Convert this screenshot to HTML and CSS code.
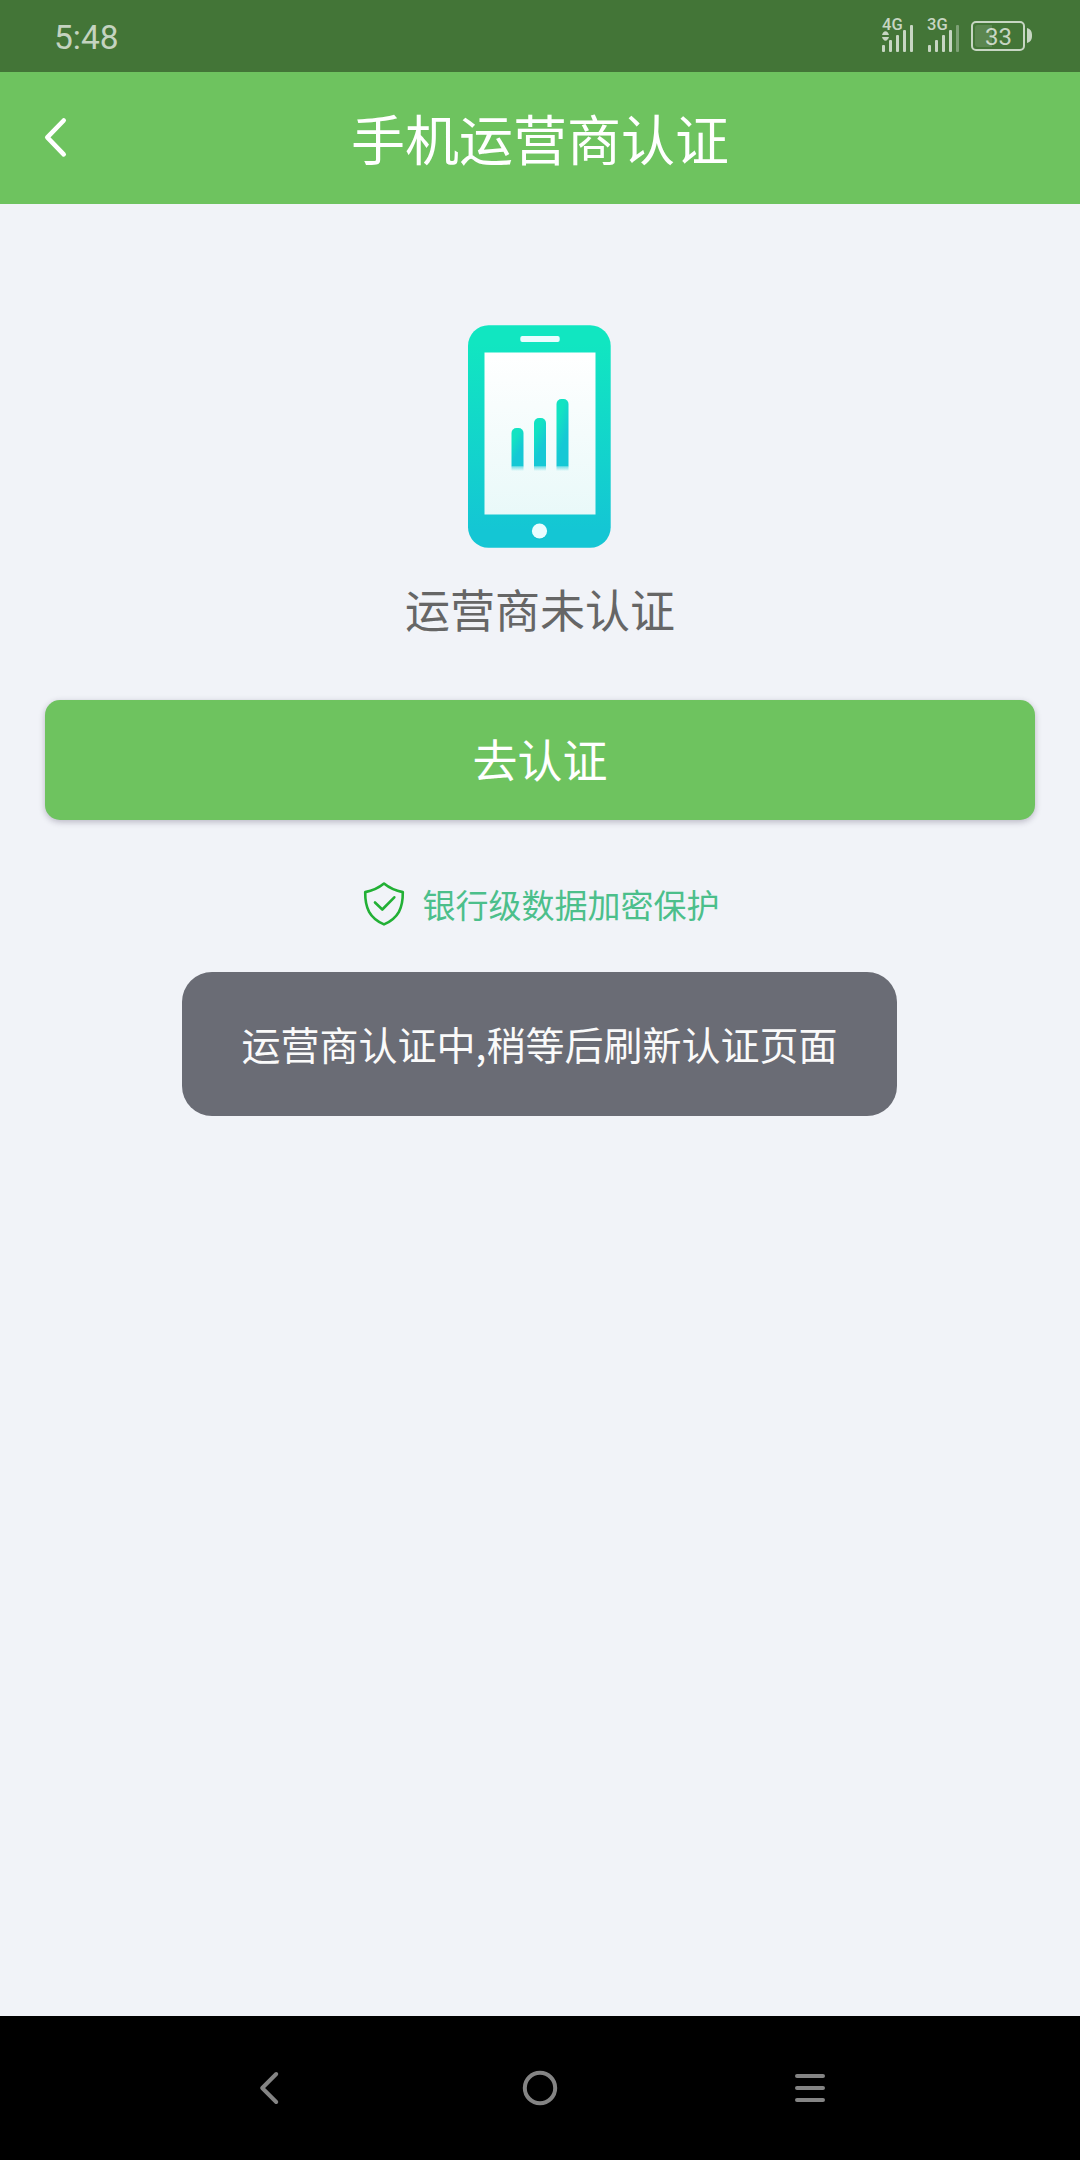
FILE: index.html
```html
<!DOCTYPE html>
<html lang="zh-CN">
<head>
<meta charset="utf-8">
<title>手机运营商认证</title>
<link rel="stylesheet" href="styles.css">
</head>
<body>
<div class="status">
  <span class="time">5:48</span>
  <svg class="indicators" width="160" height="72" viewBox="880 0 160 72">
    <g class="ink">
      <text class="network" x="882" y="30">4G</text>
      <path d="M882 35c.6-2 2-3.700 3.500-3.700s2.900 1.700 3.500 3.700zM882 37c.6 2 2 3.700 3.500 3.700s2.900-1.700 3.500-3.700z"/>
      <rect x="882" y="45" width="3" height="7" rx="1"/>
      <rect x="889" y="40" width="3" height="12" rx="1"/>
      <rect x="896" y="35" width="3" height="17" rx="1"/>
      <rect x="903" y="30" width="3" height="22" rx="1"/>
      <rect x="910" y="25" width="3" height="27" rx="1"/>
      <text class="network" x="927" y="30">3G</text>
      <rect x="928" y="45" width="3" height="7" rx="1"/>
      <rect x="935" y="40" width="3" height="12" rx="1"/>
      <rect x="942" y="35" width="3" height="17" rx="1"/>
      <rect x="949" y="30" width="3" height="22" rx="1"/>
      <rect class="faint" x="956" y="25" width="3" height="27" rx="1"/>
      <rect class="frame" x="972" y="22" width="52" height="28" rx="4"/>
      <path d="M1027 28c3.500 1 5 3 5 7.500s-1.500 6.500-5 7.500z"/>
      <text class="level" x="985" y="45">33</text>
    </g>
    <path class="charge" d="M978 25h14v22h-14a3 3 0 0 1-3-3v-16a3 3 0 0 1 3-3z"/>
  </svg>
</div>
<header class="header">
  <svg class="back" width="24" height="42" viewBox="0 0 24 42"><path d="M19.700 3.500L3.300 20.400l16.400 17"/></svg>
  <h1 class="title">手机运营商认证</h1>
</header>
<main class="main">
  <svg class="phone" width="143" height="223" viewBox="468 325 143 223">
    <defs>
      <linearGradient id="body" x1="0" y1="0" x2="0" y2="1"><stop offset=".08" stop-color="#11e6c1"/><stop offset=".92" stop-color="#14c6d4"/></linearGradient>
      <linearGradient id="screen" x1="0" y1="0" x2="0" y2="1"><stop offset="0" stop-color="#fff"/><stop offset="1" stop-color="#e9f9f9"/></linearGradient>
      <linearGradient id="bar" x1="0" y1="0" x2=".5" y2="1"><stop offset=".3" stop-color="#12e3c2"/><stop offset=".75" stop-color="#15c8d5"/></linearGradient>
      <linearGradient id="fade" x1="0" y1="0" x2="0" y2="1"><stop offset="0" stop-color="#15c8d5" stop-opacity=".55"/><stop offset="1" stop-color="#15c8d5" stop-opacity="0"/></linearGradient>
    </defs>
    <rect x="468" y="325.300" width="142.700" height="222.400" rx="20.500" fill="url(#body)"/>
    <rect x="520.300" y="336" width="39.400" height="6" rx="2" fill="#e9fdff"/>
    <rect x="484.500" y="352.500" width="111" height="162" fill="url(#screen)"/>
    <g fill="url(#bar)">
      <path d="M511.500 466.500V433a5 5 0 0 1 5-5h2a5 5 0 0 1 5 5v33.500z"/>
      <path d="M534 466.500V423a5 5 0 0 1 5-5h2a5 5 0 0 1 5 5v43.500z"/>
      <path d="M556.500 466.500V404a5 5 0 0 1 5-5h2a5 5 0 0 1 5 5v62.500z"/>
    </g>
    <g fill="url(#fade)">
      <rect x="511.500" y="466.500" width="12" height="4.500"/>
      <rect x="534" y="466.500" width="12" height="4.500"/>
      <rect x="556.500" y="466.500" width="12" height="4.500"/>
    </g>
    <circle cx="539.500" cy="532" r="7.500" fill="#0aa9bd" opacity=".35"/>
    <circle cx="539.500" cy="531" r="7.600" fill="#e9fdff"/>
  </svg>
  <p class="state">运营商未认证</p>
  <button class="action" type="button">去认证</button>
  <div class="security">
    <svg class="shield" width="42" height="46" viewBox="0 0 42 46">
      <path d="M21 2.500C15.500 7 9 9.800 2.200 11.100C2 27 6.500 37 21 43.400C35.500 37 40 27 39.800 11.100C33 9.800 26.500 7 21 2.500z"/>
      <path d="M12 21.500l7.300 7L31.300 16.300"/>
    </svg>
    <span>银行级数据加密保护</span>
  </div>
  <div class="toast">运营商认证中,稍等后刷新认证页面</div>
</main>
<nav class="nav">
  <svg width="40" height="40" viewBox="0 0 40 40"><path d="M26.200 6L12.200 20L26.200 34"/></svg>
  <svg width="40" height="40" viewBox="0 0 40 40"><circle cx="20" cy="20" r="15.200"/></svg>
  <svg width="40" height="40" viewBox="0 0 40 40"><path d="M7 8h26M7 20h26M7 32h26"/></svg>
</nav>
</body>
</html>
```

FILE: styles.css
```css
* { box-sizing: border-box; }
body {
  display: flex;
  flex-direction: column;
  width: 1080px;
  height: 2160px;
  margin: 0;
  background: #f1f3f8;
  font-family: "Noto Sans CJK SC", sans-serif;
}
.status {
  display: flex;
  justify-content: space-between;
  height: 72px;
  padding: 0 40px 0 54px;
  background: #437537;
}
.time {
  color: #c4d3c0;
  font: 33.500px/75px Roboto, sans-serif;
}
.ink { fill: #c7d6c3; font-family: Roboto, sans-serif; }
.network { font-size: 16.500px; font-weight: 500; }
.level { font-size: 24px; }
.frame { fill: none; stroke: #c7d6c3; stroke-width: 2; }
.faint { opacity: .45; }
.charge { fill: #fff; opacity: .13; }
.header {
  display: grid;
  grid-template-columns: 100px 1fr 100px;
  align-items: center;
  height: 132px;
  background: #6ec35f;
}
.back {
  margin-left: 44px;
  fill: none;
  stroke: #fff;
  stroke-width: 4.6;
  stroke-linecap: round;
  stroke-linejoin: round;
}
.title {
  margin: 0;
  color: #fff;
  font-size: 54px;
  font-weight: 400;
  line-height: 80px;
  text-align: center;
}
.main {
  display: flex;
  flex: 1;
  flex-direction: column;
  align-items: center;
  padding: 121px 45px 0;
}
.phone { margin-right: 1px; }
.state {
  margin: 28px 0 58px;
  color: #666;
  font-size: 45px;
  line-height: 66px;
}
.action {
  width: 100%;
  height: 120px;
  padding: 0 0 2px;
  border: 0;
  border-radius: 15px;
  background: #6ec35f;
  box-shadow: 0 2px 6px rgba(40, 30, 60, .28);
  color: #fff;
  font: 45px/66px "Noto Sans CJK SC", sans-serif;
}
.security {
  display: flex;
  align-items: center;
  gap: 18px;
  height: 48px;
  margin: 60px 0 44px 2px;
  color: #4cbf8b;
  font-size: 33px;
  line-height: 48px;
}
.shield {
  fill: none;
  stroke: #22b035;
  stroke-width: 2.6;
  stroke-linecap: round;
  stroke-linejoin: round;
}
.toast {
  height: 144px;
  margin-right: 1px;
  padding: 0 60px;
  border-radius: 30px;
  background: #6a6c75;
  color: #fafafa;
  font-size: 39px;
  line-height: 142px;
  white-space: nowrap;
}
.nav {
  display: flex;
  align-items: center;
  justify-content: center;
  gap: 230px;
  height: 144px;
  background: #000;
}
.nav svg {
  fill: none;
  stroke: #848484;
  stroke-width: 4;
  stroke-linecap: round;
  stroke-linejoin: round;
}
```
